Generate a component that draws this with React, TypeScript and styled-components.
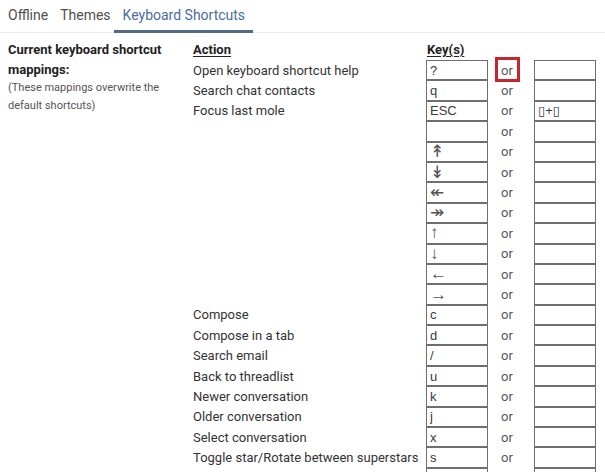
import { Fragment } from "react";
import styled, { createGlobalStyle } from "styled-components";

const GlobalStyle = createGlobalStyle`
    html, body {
        margin: 0;
        padding: 0;
        overflow: hidden;
        background: #fff;
    }
    body {
        font-family: Roboto, "Liberation Sans", Arial, sans-serif;
        color: #222;
    }
`;

const TabBar = styled.div`
    display: flex;
    gap: 12px;
    height: 33px;
    padding-left: 8px;
    border-bottom: 1px solid #ebebeb;
    box-sizing: border-box;
`;

const Tab = styled.div<{ $active?: boolean }>`
    position: relative;
    font-size: 14px;
    line-height: 30px;
    color: ${(p) => (p.$active ? "#4a6d9e" : "#505050")};
    cursor: pointer;

    ${(p) =>
        p.$active &&
        `
        &::after {
            content: "";
            position: absolute;
            left: -9px;
            right: -8px;
            bottom: -1px;
            height: 3px;
            background: #506c84;
        }
    `}
`;

const Layout = styled.div`
    display: grid;
    grid-template-columns: 185px 233px 62px 46px 62px;
    grid-template-rows: 20px;
    grid-auto-rows: 20.4px;
    padding: 7px 0 0 8px;
`;

const Intro = styled.div`
    grid-column: 1;
    grid-row: 1 / span 6;
    align-self: start;
`;

const IntroTitle = styled.div`
    font-size: 13px;
    font-weight: 700;
    line-height: 20px;
    color: #222;
`;

const IntroNote = styled.div`
    font-size: 11px;
    line-height: 18px;
    color: #555;
    margin-top: -1px;
`;

const Head = styled.div<{ $col: number }>`
    grid-column: ${(p) => p.$col};
    grid-row: 1;
    font-size: 13px;
    font-weight: 700;
    line-height: 20px;
    align-self: start;
    justify-self: start;
    text-decoration: underline;
    text-underline-offset: 2px;
    padding-left: ${(p) => (p.$col === 3 ? "1px" : "0")};
`;

const ActionCell = styled.div<{ $row: number }>`
    grid-column: 2;
    grid-row: ${(p) => p.$row};
    font-size: 13px;
    color: #333;
    display: flex;
    align-items: center;
    white-space: nowrap;
`;

const KeyInput = styled.input<{ $row: number; $col: number; $glyph?: boolean }>`
    grid-column: ${(p) => p.$col};
    grid-row: ${(p) => p.$row};
    box-sizing: border-box;
    width: 62px;
    height: 20.4px;
    margin: 0;
    padding: 0 3px;
    border: 1px solid #6f6f6f;
    border-radius: 0;
    outline: none;
    background: #fff;
    font-family: "Liberation Sans", "DejaVu Sans", Arial, sans-serif;
    font-size: ${(p) => (p.$glyph ? "17px" : "13px")};
    color: ${(p) => (p.$glyph ? "#555" : "#3a3a3a")};
`;

const OrCell = styled.div<{ $row: number }>`
    grid-column: 4;
    grid-row: ${(p) => p.$row};
    position: relative;
    display: flex;
    align-items: center;
    padding-left: 13px;
    font-size: 13px;
    color: #555;
`;

const Highlight = styled.span`
    position: absolute;
    left: 7px;
    top: -3px;
    width: 25px;
    height: 25px;
    box-sizing: border-box;
    border: 3px solid #c4262c;
`;

type Row = { action: string; key: string; alt?: string; glyph?: boolean };

const rows: Row[] = [
    { action: "Open keyboard shortcut help", key: "?" },
    { action: "Search chat contacts", key: "q" },
    { action: "Focus last mole", key: "ESC", alt: "\u25AF+\u25AF" },
    { action: "", key: "" },
    { action: "", key: "\u219F", glyph: true },
    { action: "", key: "\u21A1", glyph: true },
    { action: "", key: "\u219E", glyph: true },
    { action: "", key: "\u21A0", glyph: true },
    { action: "", key: "\u2191", glyph: true },
    { action: "", key: "\u2193", glyph: true },
    { action: "", key: "\u2190", glyph: true },
    { action: "", key: "\u2192", glyph: true },
    { action: "Compose", key: "c" },
    { action: "Compose in a tab", key: "d" },
    { action: "Search email", key: "/" },
    { action: "Back to threadlist", key: "u" },
    { action: "Newer conversation", key: "k" },
    { action: "Older conversation", key: "j" },
    { action: "Select conversation", key: "x" },
    { action: "Toggle star/Rotate between superstars", key: "s" },
    { action: "Remove label", key: "y" },
];

export default function App() {
    return (
        <>
            <GlobalStyle />
            <TabBar>
                <Tab>Offline</Tab>
                <Tab>Themes</Tab>
                <Tab $active>Keyboard Shortcuts</Tab>
            </TabBar>

            <Layout>
                <Intro>
                    <IntroTitle>
                        Current keyboard shortcut
                        <br />
                        mappings:
                    </IntroTitle>
                    <IntroNote>
                        (These mappings overwrite the
                        <br />
                        default shortcuts)
                    </IntroNote>
                </Intro>
                <Head $col={2}>Action</Head>
                <Head $col={3}>Key(s)</Head>

                {rows.map((row, i) => (
                    <Fragment key={i}>
                        <ActionCell $row={i + 2}>{row.action}</ActionCell>
                        <KeyInput $row={i + 2} $col={3} $glyph={row.glyph} readOnly defaultValue={row.key} />
                        <OrCell $row={i + 2}>
                            or
                            {i === 0 ? <Highlight /> : null}
                        </OrCell>
                        <KeyInput $row={i + 2} $col={5} readOnly defaultValue={row.alt ?? ""} />
                    </Fragment>
                ))}
            </Layout>
        </>
    );
}
